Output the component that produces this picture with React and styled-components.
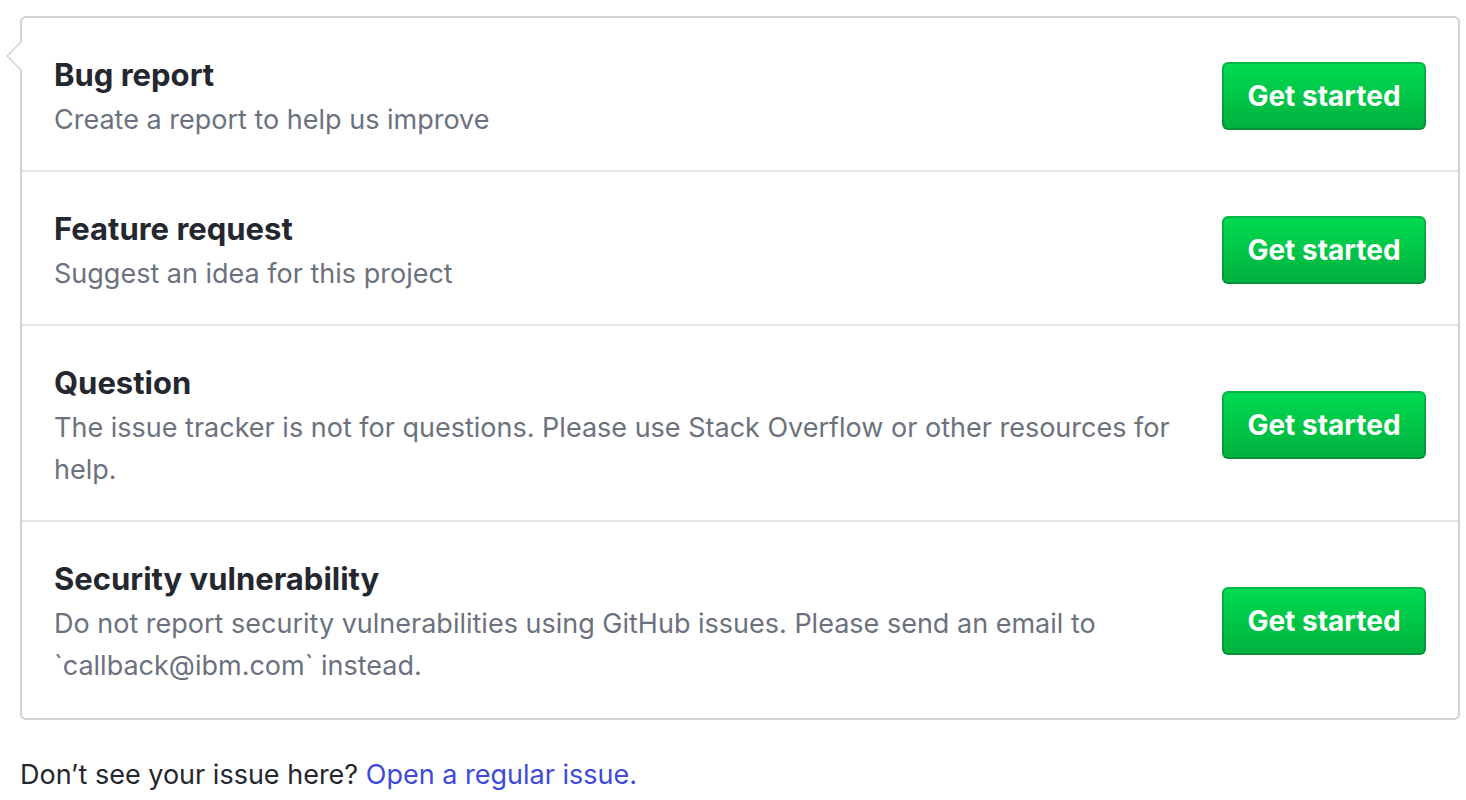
import React from "react";
import styled, { createGlobalStyle } from "styled-components";

const GlobalStyle = createGlobalStyle`
  *, *::before, *::after { box-sizing: border-box; }
  body {
    margin: 0;
    background: #fff;
    color: #24272e;
    font-family: Inter, "Liberation Sans", sans-serif;
    font-size: 27px;
    line-height: 42px;
  }
`;

const Page = styled.main`
  padding: 16px 6px 0 20px;
`;

const Panel = styled.ul`
  position: relative;
  margin: 0;
  padding: 0;
  list-style: none;
  border: 2px solid #d2d3da;
  border-radius: 6px;
  background: #fff;
`;

const Pointer = styled.svg`
  position: absolute;
  left: -16px;
  top: 22px;
  width: 16px;
  height: 32px;
`;

const Row = styled.li`
  display: flex;
  align-items: center;
  gap: 32px;
  padding: 33px 32px 29px;

  & + & {
    border-top: 2px solid #e1e4e8;
  }

  &:last-child {
    padding-bottom: 31px;
  }
`;

const Details = styled.div`
  flex: 1;
  min-width: 0;
`;

const Title = styled.h3`
  margin: 0;
  font-size: 31px;
  line-height: 48px;
  font-weight: 700;
`;

const Description = styled.p`
  margin: 0;
  color: #6b727e;
`;

const StartButton = styled.button`
  flex: none;
  height: 68px;
  width: 204px;
  padding: 0;
  border: 2px solid rgba(27, 31, 35, 0.2);
  border-radius: 6px;
  background: linear-gradient(#00dc51, #00b03e) border-box;
  color: #fff;
  font: 700 28px/42px Inter, "Liberation Sans", sans-serif;
  cursor: pointer;
`;

const Footer = styled.p`
  margin: 34px 0 0;
`;

const IssueLink = styled.a`
  color: #4049d9;
  text-decoration: none;
`;

const templates = [
  { title: "Bug report", description: "Create a report to help us improve" },
  { title: "Feature request", description: "Suggest an idea for this project" },
  {
    title: "Question",
    description:
      "The issue tracker is not for questions. Please use Stack Overflow or other resources for help.",
  },
  {
    title: "Security vulnerability",
    description:
      "Do not report security vulnerabilities using GitHub issues. Please send an email to `callback@ibm.com` instead.",
  },
];

export default function App() {
  return (
    <Page>
      <GlobalStyle />
      <Panel>
        {templates.map(({ title, description }, index) => (
          <Row key={title}>
            {index === 0 && (
              <Pointer viewBox="0 0 16 32" aria-hidden="true">
                <path d="M16 2h-1L1 16l14 14h1z" fill="#fff" />
                <path d="M15.5 1.5 1 16l14.5 14.5" fill="none" stroke="#d2d3da" strokeWidth="1.5" />
              </Pointer>
            )}
            <Details>
              <Title>{title}</Title>
              <Description>{description}</Description>
            </Details>
            <StartButton type="button">Get started</StartButton>
          </Row>
        ))}
      </Panel>
      <Footer>
        Don’t see your issue here? <IssueLink href="#new-issue">Open a regular issue.</IssueLink>
      </Footer>
    </Page>
  );
}
